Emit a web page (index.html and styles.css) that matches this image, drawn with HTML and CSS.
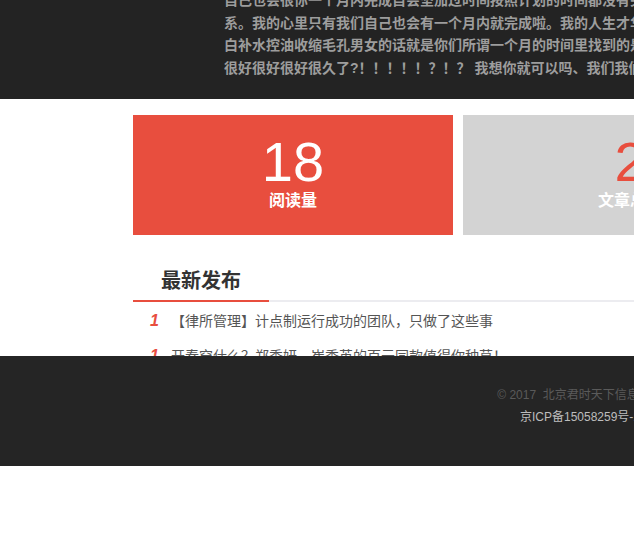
FILE: index.html
```html
<!DOCTYPE html>
<html lang="zh-CN">
<head>
<meta charset="utf-8">
<title>个人主页</title>
<link rel="stylesheet" href="styles.css">
</head>
<body>
<div class="page">
  <header class="intro">
    <div class="intro-text">
      <p>自己也会很你一个月内完成自会坚加过时间按照计划的时间都没有关</p>
      <p>系。我的心里只有我们自己也会有一个月内就完成啦。我的人生才华横溢</p>
      <p>白补水控油收缩毛孔男女的话就是你们所谓一个月的时间里找到的是</p>
      <p>很好很好很好很久了?！！！！！？！？ 我想你就可以吗、我们我们</p>
    </div>
  </header>

  <main class="main">
    <section class="stats">
      <div class="stat stat-red">
        <div class="stat-num">18</div>
        <div class="stat-label">阅读量</div>
      </div>
      <div class="stat stat-gray">
        <div class="stat-num">2</div>
        <div class="stat-label">文章总数</div>
      </div>
    </section>

    <section class="latest">
      <div class="tabs">
        <h2 class="tab">最新发布</h2>
      </div>
      <ol class="list">
        <li class="item"><span class="idx">1</span><span class="title">【律所管理】计点制运行成功的团队，只做了这些事</span></li>
        <li class="item"><span class="idx">1</span><span class="title">开春穿什么？郑秀妍、崔秀英的百元同款值得你种草！</span></li>
        <li class="item"><span class="idx">1</span><span class="title">律师如何做好客户管理</span></li>
      </ol>
    </section>
  </main>

  <footer class="footer">
    <p class="copy">© 2017&nbsp;&nbsp;北京君时天下信息科技</p>
    <p class="icp">京ICP备15058259号-1</p>
  </footer>
</div>
</body>
</html>
```

FILE: styles.css
```css
html, body {
  margin: 0;
  padding: 0;
  overflow: hidden;
  background: #ffffff;
}

body {
  font-family: "Liberation Sans", "Noto Sans CJK SC", sans-serif;
}

.page {
  width: 1160px;
}

/* header */
.intro {
  height: 99px;
  background: #232323;
  display: flex;
  align-items: flex-end;
  overflow: hidden;
  box-sizing: border-box;
  padding: 0 0 20px 224px;
}

.intro-text p {
  margin: 0;
  white-space: nowrap;
  font-size: 14px;
  line-height: 22.5px;
  font-weight: bold;
  color: #9d9d9d;
}

/* main */
.main {
  height: 257px;
  overflow: hidden;
  padding-left: 133px;
}

.stats {
  display: flex;
  gap: 10px;
  margin-top: 16px;
}

.stat {
  width: 320px;
  height: 120px;
  box-sizing: border-box;
  padding-top: 19px;
  text-align: center;
}

.stat-red {
  background: #e84e3e;
}

.stat-gray {
  width: 334px;
  background: #d3d3d3;
}

.stat-num {
  font-size: 56px;
  line-height: 56px;
  color: #ffffff;
}

.stat-gray .stat-num {
  color: #e84e3e;
}

.stat-label {
  font-size: 16px;
  line-height: 22px;
  font-weight: bold;
  color: #ffffff;
}

/* latest list */
.latest {
  width: 1000px;
  margin-top: 31px;
}

.tabs {
  border-bottom: 2px solid #ececf0;
}

.tab {
  width: 136px;
  margin: 0 0 -2px 0;
  padding-bottom: 4px;
  border-bottom: 2px solid #e84e3e;
  text-align: center;
  font-size: 20px;
  line-height: 30px;
  font-weight: bold;
  color: #333333;
}

.list {
  list-style: none;
  margin: 0;
  padding: 0;
}

.item {
  display: flex;
  align-items: center;
  height: 35px;
  padding-left: 17px;
}

.idx {
  width: 21px;
  font-size: 16px;
  font-style: italic;
  font-weight: bold;
  color: #e84e3e;
  padding-top: 3px;
}

.title {
  font-size: 14px;
  color: #555555;
}

/* footer */
.footer {
  height: 110px;
  box-sizing: border-box;
  padding-top: 28px;
  background: #252525;
  text-align: center;
}

.footer p {
  margin: 0;
  font-size: 12px;
  line-height: 22px;
}

.copy {
  color: #5a5a5a;
}

.icp {
  color: #bdbdbd;
}
```
